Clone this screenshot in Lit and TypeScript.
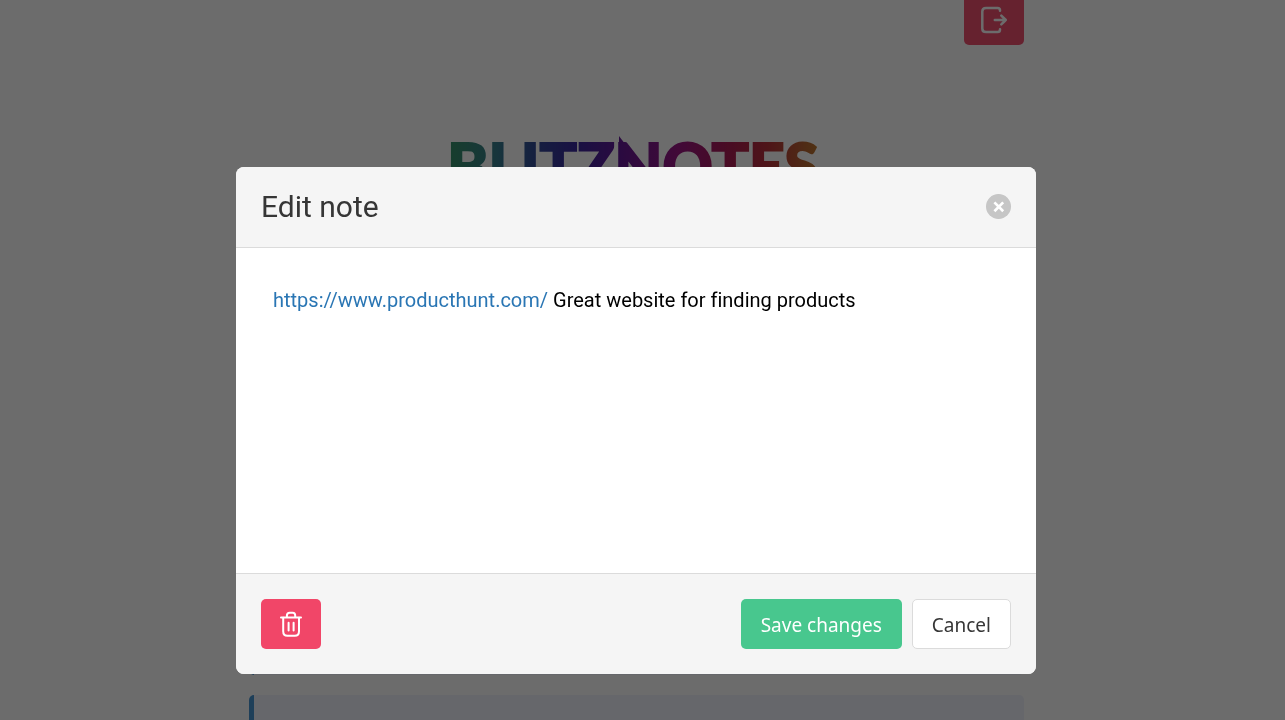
import { LitElement, html, css, svg } from "lit";
import { customElement, property, state } from "lit/decorators.js";

const logoutIcon = svg`
  <path d="M20 4.8V4.2Q20 1.9 17.6 1.9H6Q2.3 1.9 2.3 5.5V22.5Q2.3 26.1 6 26.1H17.6Q20 26.1 20 23.8V23.2"/>
  <path d="M14.8 14H25.8M21.3 9.6L25.8 14L21.3 18.4"/>`;

const trashIcon = svg`
  <path d="M4 7.6H24M9.9 7.4V5.6Q9.9 2.7 12.7 2.7H15.7Q18.2 2.7 18.2 5.6V7.4"/>
  <path d="M6.2 7.8V21.2Q6.2 25.7 10.4 25.7H17.8Q22 25.7 22 21.2V7.8"/>
  <path d="M11.6 12.8V20.4M16.6 12.8V20.4"/>`;

@customElement("icon-button")
class IconButton extends LitElement {
  static styles = css`
    :host { display: block; }
    .button {
      display: flex;
      align-items: center;
      justify-content: center;
      width: 60px;
      height: 50px;
      padding: 0;
      border: 0;
      border-radius: 5px;
      background: #f14668;
      color: #fff;
      cursor: pointer;
    }
    .icon {
      width: 28px;
      height: 28px;
      fill: none;
      stroke: currentColor;
      stroke-width: 2;
      stroke-linecap: round;
      stroke-linejoin: round;
    }
    .logout {
      stroke-width: 2.5;
    }
  `;

  @property() label = "";
  @property() icon = "trash";

  render() {
    return html`
      <button class="button" type="button" aria-label=${this.label}>
        <svg class="icon ${this.icon}" viewBox="0 0 28 28" aria-hidden="true">
          ${this.icon === "logout" ? logoutIcon : trashIcon}
        </svg>
      </button>
    `;
  }
}

@customElement("note-dialog")
class NoteDialog extends LitElement {
  static styles = css`
    :host {
      position: fixed;
      inset: 0;
      box-sizing: border-box;
      padding: 167px 13px 0 0;
      overflow: hidden;
      background: rgba(10, 10, 10, 0.6);
      font-family: Roboto, sans-serif;
    }
    .card {
      max-width: 800px;
      margin: 0 auto;
      border-radius: 8px;
      overflow: hidden;
      background: #fff;
    }
    .head,
    .foot {
      display: flex;
      align-items: center;
      justify-content: space-between;
      padding: 25px;
      background: #f5f5f5;
    }
    .head {
      border-bottom: 1px solid #dbdbdb;
    }
    .foot {
      border-top: 1px solid #dbdbdb;
    }
    .title {
      margin: 0;
      color: #363636;
      font-size: 30px;
      font-weight: 400;
      line-height: 30px;
    }
    .close {
      width: 25px;
      height: 25px;
      margin-bottom: 2px;
      padding: 0;
      border: 0;
      border-radius: 50%;
      background: rgba(10, 10, 10, 0.2);
      cursor: pointer;
    }
    .cross {
      display: block;
      width: 25px;
      height: 25px;
      stroke: #fff;
      stroke-width: 2.7;
    }
    .body {
      min-height: 325px;
      padding: 37px;
      box-sizing: border-box;
      color: #000;
      font-size: 20px;
      font-variant-ligatures: none;
      line-height: 30px;
      outline: none;
    }
    .link {
      color: #2a76b4;
      text-decoration: none;
    }
    .actions {
      display: flex;
      gap: 10px;
    }
    .action {
      height: 50px;
      padding: 2px 19px 0;
      border: 1px solid transparent;
      border-radius: 5px;
      font: 19px/30px "Noto Sans", "Open Sans", sans-serif;
      cursor: pointer;
    }
    .save {
      background: #48c78e;
      color: #fff;
    }
    .cancel {
      border-color: #dbdbdb;
      background: #fff;
      color: #363636;
    }
  `;

  render() {
    return html`
      <section class="card" role="dialog" aria-labelledby="title">
        <header class="head">
          <h2 class="title" id="title">Edit note</h2>
          <button class="close" type="button" aria-label="Close">
            <svg class="cross" viewBox="0 0 25 25" aria-hidden="true">
              <path d="M8.4 8.4L17.2 17.2M17.2 8.4L8.4 17.2" />
            </svg>
          </button>
        </header>
        <div class="body" contenteditable="true" role="textbox" aria-label="Note" spellcheck="false"><a class="link" href="https://www.producthunt.com/">https://www.producthunt.com/</a> Great website for finding products</div>
        <footer class="foot">
          <icon-button label="Delete note" icon="trash"></icon-button>
          <div class="actions">
            <button class="action save" type="button">Save changes</button>
            <button class="action cancel" type="button">Cancel</button>
          </div>
        </footer>
      </section>
    `;
  }
}

@customElement("app-root")
class AppRoot extends LitElement {
  static styles = css`
    :host {
      display: block;
      height: 100vh;
      overflow: hidden;
      background: #fff;
      font-family: Roboto, sans-serif;
    }
    .page {
      max-width: 775px;
      margin: -5px auto 0;
      padding-right: 12px;
    }
    .bar {
      display: flex;
      justify-content: flex-end;
    }
    .brand {
      display: flex;
      justify-content: center;
      padding: 80px 6px 0 0;
    }
    .logo {
      width: 380px;
      height: 90px;
      overflow: visible;
    }
    .wordmark {
      font-family: Lato, sans-serif;
      font-size: 62px;
      font-weight: 900;
      stroke-width: 2;
    }
    .notes {
      display: flex;
      flex-direction: column;
      gap: 20px;
      padding-top: 360px;
    }
    .note {
      height: 100px;
      border-left: 5px solid #3e8ed0;
      border-radius: 5px;
      background: #f0f2fc;
    }
  `;

  @state() private notes = [1, 2];

  render() {
    return html`
      <main class="page">
        <div class="bar"><icon-button label="Log out" icon="logout"></icon-button></div>
        <div class="brand">
          <svg class="logo" viewBox="0 0 380 90" role="img" aria-label="Blitznotes">
            <defs>
              <linearGradient id="spectrum" gradientUnits="userSpaceOnUse" x1="6" y1="0" x2="374" y2="0">
                <stop offset="0" stop-color="#2c8c62" />
                <stop offset="0.13" stop-color="#2b7488" />
                <stop offset="0.23" stop-color="#263f90" />
                <stop offset="0.34" stop-color="#2f1c98" />
                <stop offset="0.46" stop-color="#5a0c92" />
                <stop offset="0.62" stop-color="#94087c" />
                <stop offset="0.76" stop-color="#a80f4a" />
                <stop offset="0.86" stop-color="#b42430" />
                <stop offset="1" stop-color="#b87024" />
              </linearGradient>
            </defs>
            <text class="wordmark" x="189" y="64" text-anchor="middle" fill="url(#spectrum)" stroke="url(#spectrum)">BLITZNOTES</text>
            <path d="M175 11L194 36H175Z" fill="url(#spectrum)" />
          </svg>
        </div>
        <div class="notes">${this.notes.map(() => html`<article class="note"></article>`)}</div>
      </main>
      <note-dialog></note-dialog>
    `;
  }
}
